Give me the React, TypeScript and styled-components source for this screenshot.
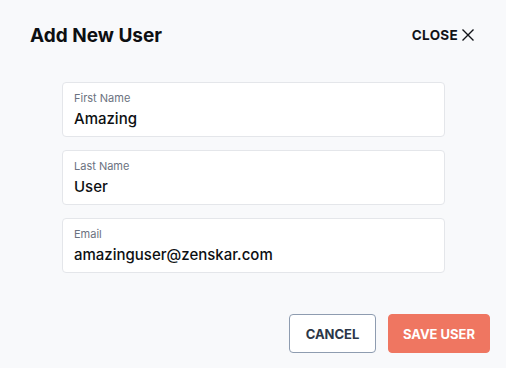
import React from 'react';
import styled, { createGlobalStyle } from 'styled-components';

const GlobalStyle = createGlobalStyle`
  html, body {
    margin: 0;
    padding: 0;
    background: #f8f9fb;
  }
  body {
    font-family: Inter, "Noto Sans", sans-serif;
    color: #111318;
  }
`;

const Modal = styled.div`
  width: 506px;
  height: 368px;
  box-sizing: border-box;
  background: #f8f9fb;
  display: flex;
  flex-direction: column;
`;

const Header = styled.div`
  display: flex;
  align-items: center;
  justify-content: space-between;
  height: 30px;
  padding: 20px 31px 0 30px;
`;

const Title = styled.h2`
  margin: 0;
  font-size: 19px;
  font-weight: 700;
  letter-spacing: 0;
  color: #0d0f12;
`;

const CloseButton = styled.button`
  display: flex;
  align-items: center;
  gap: 3px;
  border: none;
  background: none;
  padding: 0;
  font-family: inherit;
  font-size: 13.5px;
  font-weight: 700;
  letter-spacing: 0.3px;
  color: #111318;
  cursor: pointer;
`;

const Fields = styled.div`
  display: flex;
  flex-direction: column;
  gap: 13px;
  margin: 32px 61px 0 62px;
`;

const Field = styled.label`
  display: flex;
  flex-direction: column;
  height: 55px;
  box-sizing: border-box;
  padding: 8px 11px 0;
  background: #ffffff;
  border: 1px solid #e4e6ea;
  border-radius: 4px;
`;

const FieldLabel = styled.span`
  font-size: 11px;
  line-height: 14px;
  color: #6b7280;
`;

const FieldValue = styled.span`
  margin-top: 4px;
  font-size: 15px;
  line-height: 20px;
  font-weight: 500;
  color: #0d0f12;
`;

const Actions = styled.div`
  display: flex;
  justify-content: flex-end;
  gap: 12px;
  margin-top: auto;
  padding: 0 16px 15px 0;
`;

const Button = styled.button<{ $primary?: boolean; $width: number }>`
  width: ${p => p.$width}px;
  height: 39px;
  box-sizing: border-box;
  padding: 0;
  border-radius: 4px;
  font-family: inherit;
  font-size: 13px;
  font-weight: 700;
  cursor: pointer;
  border: 1px solid ${p => (p.$primary ? '#ef7661' : '#8e9cb0')};
  background: ${p => (p.$primary ? '#ef7661' : '#ffffff')};
  color: ${p => (p.$primary ? '#ffffff' : '#2b3647')};
`;

const fields = [
  { label: 'First Name', value: 'Amazing' },
  { label: 'Last Name', value: 'User' },
  { label: 'Email', value: 'amazinguser@zenskar.com' },
];

export default function App() {
  return (
    <>
      <GlobalStyle />
      <Modal>
        <Header>
          <Title>Add New User</Title>
          <CloseButton>
            CLOSE
            <svg width="14" height="14" viewBox="0 0 14 14" fill="none">
              <path d="M1.5 1.5L12.5 12.5M12.5 1.5L1.5 12.5" stroke="#111318" strokeWidth="1.4" />
            </svg>
          </CloseButton>
        </Header>
        <Fields>
          {fields.map(f => (
            <Field key={f.label}>
              <FieldLabel>{f.label}</FieldLabel>
              <FieldValue>{f.value}</FieldValue>
            </Field>
          ))}
        </Fields>
        <Actions>
          <Button $width={87}>CANCEL</Button>
          <Button $primary $width={102}>SAVE USER</Button>
        </Actions>
      </Modal>
    </>
  );
}
